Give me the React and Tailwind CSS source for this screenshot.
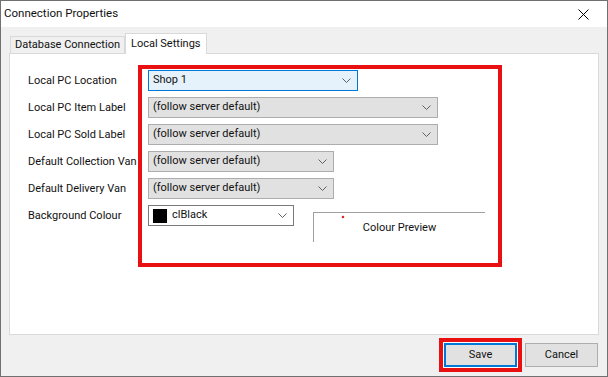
import React from "react";

const Chevron = () => (
  <svg width="9" height="5" viewBox="0 0 9 5" className="shrink-0">
    <polyline points="0.5,0.5 4.5,4.5 8.5,0.5" fill="none" stroke="#606060" strokeWidth="1" />
  </svg>
);

const Combo = ({ width, text, variant = "gray", swatch = false }) => {
  const styles = {
    focus: "bg-[#e5f1fb] border-[#0078d7]",
    gray: "bg-[#e1e1e1] border-[#adadad]",
    white: "bg-white border-[#7a7a7a]",
  };
  return (
    <div
      className={`h-[21px] border flex items-center pl-[4px] pr-[6px] ${styles[variant]}`}
      style={{ width }}
    >
      {swatch && <span className="w-[14px] h-[14px] bg-black mr-[5px] shrink-0" />}
      <span className="flex-1 truncate">{text}</span>
      <Chevron />
    </div>
  );
};

const labels = [
  "Local PC Location",
  "Local PC Item Label",
  "Local PC Sold Label",
  "Default Collection Van",
  "Default Delivery Van",
  "Background Colour",
];

const App = () => {
  return (
    <div
      className="w-[608px] h-[377px] bg-[#f0f0f0] border border-[#707070] flex flex-col text-[11px] text-[#111] overflow-hidden"
      style={{ fontFamily: 'Roboto, "Segoe UI", sans-serif' }}
    >
      {/* title bar */}
      <div className="h-[26px] bg-white flex items-center justify-between pl-[3px] pr-[18px] shrink-0 text-[11.5px]">
        <span>Connection Properties</span>
        <svg width="11" height="11" viewBox="0 0 11 11">
          <path d="M0.5 0.5 L10.5 10.5 M10.5 0.5 L0.5 10.5" stroke="#000" strokeWidth="1" />
        </svg>
      </div>

      {/* tabs */}
      <div className="flex items-end h-[26px] pl-[9px] shrink-0 whitespace-nowrap">
        <div className="h-[17px] px-[4px] border border-b-0 border-[#d9d9d9] flex items-center bg-[#f0f0f0]">
          Database Connection
        </div>
        <div className="h-[21px] px-[5px] border border-b-0 border-[#d9d9d9] flex items-center bg-white relative -mb-px z-10">
          Local Settings
        </div>
      </div>

      {/* panel */}
      <div className="mx-[8px] h-[282px] bg-white border border-[#d9d9d9] shrink-0 flex pt-[11px] pl-[18px]">
        <div className="flex flex-col pt-[5px] w-[110px] whitespace-nowrap">
          {labels.map((l) => (
            <div key={l} className="h-[27px] leading-[21px]">
              {l}
            </div>
          ))}
        </div>
        <div className="w-[364px] h-[202px] border-4 border-[#e81010] pl-[6px] pt-[1px] flex flex-col gap-[6px] whitespace-nowrap">
          <Combo width={210} text="Shop 1" variant="focus" />
          <Combo width={290} text="(follow server default)" />
          <Combo width={290} text="(follow server default)" />
          <Combo width={186} text="(follow server default)" />
          <Combo width={186} text="(follow server default)" />
          <div className="flex items-start gap-[19px]">
            <Combo width={146} text="clBlack" variant="white" swatch />
            <div className="mt-[7px] w-[172px] h-[30px] border-t border-l border-[#a0a0a0] relative flex items-center justify-center">
              <span className="absolute left-[28px] top-[3px] w-[2px] h-[2px] bg-[#e00000] rotate-45" />
              <span className="pt-[2px]">Colour Preview</span>
            </div>
          </div>
        </div>
      </div>

      {/* footer */}
      <div className="flex-1 flex items-start justify-end pr-[9px] pt-[3px] gap-[3px]">
        <div className="border-4 border-[#e81010] p-px bg-white">
          <div className="w-[73px] h-[24px] border-2 border-[#0078d7] bg-[#e1e1e1] flex items-center justify-center">
            Save
          </div>
        </div>
        <div className="mt-[5px] w-[73px] h-[24px] border border-[#adadad] bg-[#e1e1e1] flex items-center justify-center">
          Cancel
        </div>
      </div>
    </div>
  );
};

export default App;
